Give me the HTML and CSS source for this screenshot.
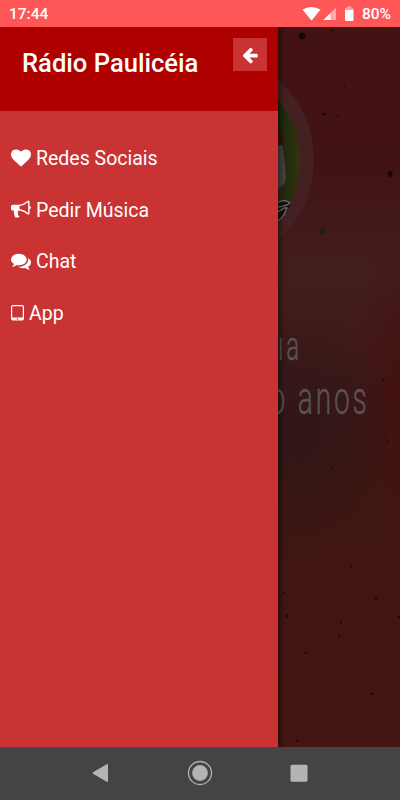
FILE: index.html
```
<!DOCTYPE html>
<html lang="pt-BR">

<head>
    <meta charset="utf-8">
    <meta name="viewport" content="width=device-width, initial-scale=1">
    <title>Rádio Paulicéia</title>
    <link rel="stylesheet" href="styles.css">
</head>

<body>
    <div class="phone">
        <!-- Status bar -->
        <div class="statusbar">
            <span class="clock">17:44</span>
            <svg class="status-icons" width="54" height="16" viewBox="0 0 54 16">
                <path fill="#fff" d="M0.500 3.600Q9.500-1.800 18.500 3.600L10.200 13.800Q9.500 14.600 8.800 13.800Z" />
                <path fill="#ffa9a9" d="M34 1.500V14H21.500Z" />
                <path fill="#fff" d="M28.500 7V14H21.500Z" />
                <path fill="#ff9d9d" d="M45 0.500h4.500v1.500h2v3h-8.500v-3h2Z" />
                <path fill="#fff" d="M43 4h8.500v10q0 1-1 1h-6.500q-1 0-1-1Z" />
            </svg>
            <span class="battery">80%</span>
        </div>

        <div class="screen">
            <!-- Side menu -->
            <div class="drawer">
                <div class="drawer-header">
                    <h1>Rádio Paulicéia</h1>
                    <button class="close-btn" aria-label="Fechar">
                        <svg width="18" height="18" viewBox="0 0 1792 1792">
                            <path fill="#fff" d="M1664 896v128q0 53-32.500 90.500t-84.500 37.500h-704l293 294q38 36 38 90t-38 90l-75 76q-37 37-90 37-52 0-91-37l-651-652q-37-37-37-90 0-52 37-91l651-650q38-38 91-38 52 0 90 38l75 74q38 38 38 91t-38 91l-293 293h704q52 0 84.500 37.500t32.500 90.500z" />
                        </svg>
                    </button>
                </div>
                <ul class="menu">
                    <li>
                        <svg width="20" height="20" viewBox="0 0 1792 1792">
                            <path d="M896 1664q-26 0-44-18l-624-602q-10-8-27.500-26t-55.500-65.500-68-97.500-53.500-121-23.500-138q0-220 127-344t351-124q62 0 126.500 21.500t120 58 95.500 68.500 76 68q36-36 76-68t95.500-68.500 120-58 126.500-21.500q224 0 351 124t127 344q0 221-229 450l-623 600q-18 18-44 18z" />
                        </svg>
                        <span>Redes Sociais</span>
                    </li>
                    <li>
                        <svg width="20" height="20" viewBox="0 0 1792 1792">
                            <path d="M1664 640q53 0 90.500 37.500t37.500 90.500-37.500 90.500-90.500 37.500v384q0 52-38 90t-90 38q-417-347-812-380-58 19-91 66t-31 100.500 40 92.500q-20 33-23 65.500t6 58 33.500 55 48 50 61.500 50.500q-29 58-111.500 83t-168.500 11.500-132-55.500q-7-23-29.500-87.500t-32-94.500-23-89-15-101 3.500-98.500 22-110.500h-122q-66 0-113-47t-47-113v-192q0-66 47-113t113-47h480q435 0 896-384 52 0 90 38t38 90v384zm-128 604v-954q-394 302-768 343v270q377 42 768 341z" />
                        </svg>
                        <span>Pedir Música</span>
                    </li>
                    <li>
                        <svg width="20" height="20" viewBox="0 0 1792 1792">
                            <path d="M1408 768q0 139-94 257t-256.500 186.500-353.500 68.500q-86 0-176-16-124 88-278 128-36 9-86 16h-3q-11 0-20.500-8t-11.500-21q-1-3-1-6.500t.5-6.500 2-6l2.500-5 3.500-5.500 4-5 4.500-5 4-4.500q5-6 23-25t26-29.500 22.500-29 25-38.500 20.500-44q-124-72-195-177t-71-224q0-139 94-257t256.500-186.500 353.500-68.500 353.500 68.500 256.500 186.500 94 257zm384 256q0 120-71 224.500t-195 176.500q10 24 20.500 44t25 38.500 22.500 29 26 29.500 23 25q1 1 4 4.500t4.500 5 4 5 3.500 5.500l2.500 5 2 6 .5 6.500-1 6.500q-3 14-13 22t-22 7q-50-7-86-16-154-40-278-128-90 16-176 16-271 0-472-132 58 4 88 4 161 0 309-45t264-129q125-92 192-212t67-254q0-77-23-152 129 71 204 178t75 230z" />
                        </svg>
                        <span>Chat</span>
                    </li>
                    <li>
                        <svg width="13" height="20" viewBox="0 0 13 20">
                            <path fill-rule="evenodd" d="M1.800 2h9.400Q13 2 13 3.800v11.900q0 1.800-1.800 1.800H1.800Q0 17.500 0 15.700V3.800Q0 2 1.800 2zM1.200 3.700v10.700h10.600V3.700q0-.5-.5-.5H1.700q-.5 0-.5.500zM6.500 15.200a.75.75 0 1 0 .01 0z" />
                        </svg>
                        <span>App</span>
                    </li>
                </ul>
            </div>

            <!-- Dimmed player page behind the menu -->
            <svg class="player" width="122" height="720" viewBox="278 27 122 720">
                <defs>
                    <linearGradient id="base" x1="0" y1="0" x2="0" y2="1">
                        <stop offset="0" stop-color="#431214" />
                        <stop offset=".2" stop-color="#421314" />
                        <stop offset=".34" stop-color="#431e1e" />
                        <stop offset=".5" stop-color="#3e1717" />
                        <stop offset=".65" stop-color="#3f1613" />
                        <stop offset="1" stop-color="#431510" />
                    </linearGradient>
                    <radialGradient id="side">
                        <stop offset="0" stop-color="#451010" stop-opacity=".8" />
                        <stop offset="1" stop-color="#451010" stop-opacity="0" />
                    </radialGradient>
                    <radialGradient id="glow">
                        <stop offset="0" stop-color="#2d1717" stop-opacity=".85" />
                        <stop offset="1" stop-color="#2d1717" stop-opacity="0" />
                    </radialGradient>
                    <linearGradient id="shade" x1="0" y1="0" x2="1" y2="0">
                        <stop offset="0" stop-color="#000" stop-opacity=".35" />
                        <stop offset="1" stop-color="#000" stop-opacity="0" />
                    </linearGradient>
                    <linearGradient id="green" gradientUnits="userSpaceOnUse" x1="278" y1="0" x2="301" y2="0">
                        <stop offset="0" stop-color="#1a230f" />
                        <stop offset=".6" stop-color="#29300f" />
                        <stop offset="1" stop-color="#363011" />
                    </linearGradient>
                </defs>
                <rect x="278" y="27" width="122" height="720" fill="url(#base)" />
                <ellipse cx="405" cy="385" rx="55" ry="170" fill="url(#side)" />
                <ellipse cx="300" cy="430" rx="90" ry="125" fill="url(#glow)" />

                <!-- station logo -->
                <ellipse cx="228" cy="160" rx="86" ry="98" fill="#452022" />
                <ellipse cx="228" cy="160" rx="72.500" ry="82" fill="url(#green)" />
                <path fill="#3a0f0f" d="M278 127Q283 134 284 143L278 147Z" />
                <path fill="#45423f" d="M278 146Q282 143 283 148L286 176Q285 186 280 190L278 192Z" />
                <path fill="#3d201c" d="M278 190L283 184L282 200H278Z" />
                <path fill="#14120c" d="M278 202Q289 199 291 204Q287 213 278 223Z" />
                <path fill="none" stroke="#666361" stroke-width="1.500" d="M278 202Q287 199 290 203Q287 206 278 207M278 212Q285 207 287 208Q284 217 278 221" />

                <!-- dust -->
                <g fill="#160809">
                    <ellipse cx="302" cy="36" rx="3.200" ry="3.600" />
                    <ellipse cx="390" cy="174" rx="2.500" ry="3" />
                    <ellipse cx="322.500" cy="231" rx="2.700" ry="3.200" fill="#29191a" />
                    <circle cx="324" cy="114" r="1.600" />
                    <circle cx="337.500" cy="115.500" r="1" />
                    <circle cx="362" cy="116" r=".8" />
                    <circle cx="332" cy="30.500" r="1" />
                    <circle cx="344.500" cy="85.500" r=".9" />
                    <circle cx="383" cy="379.500" r="1" />
                    <path d="M384.500 437.500L388.500 441.500L387.500 443Z" />
                    <circle cx="332" cy="468" r=".8" />
                    <circle cx="351" cy="566.500" r="1.100" />
                    <circle cx="376" cy="598" r="1.500" />
                    <circle cx="284" cy="593" r="1" />
                    <circle cx="287" cy="616" r="1.300" />
                    <circle cx="341" cy="622.500" r="1" />
                    <circle cx="339" cy="635.500" r=".9" />
                    <circle cx="305.500" cy="653" r="1.100" />
                    <circle cx="372" cy="694" r="1.400" />
                    <circle cx="399" cy="617" r="1.200" />
                    <circle cx="297" cy="741" r="1" />
                </g>

                <g class="player-text">
                    <text transform="translate(278 360) scale(.6 1)" font-size="40" letter-spacing="5">ıa</text>
                    <text transform="translate(269.500 413.500) scale(.61 1)" font-size="46" letter-spacing="4.700">o anos</text>
                </g>
                <rect x="278" y="27" width="7" height="720" fill="url(#shade)" />
            </svg>
        </div>

        <!-- Android buttons -->
        <div class="navbar">
            <svg width="26" height="26" viewBox="0 0 26 26">
                <path fill="#b4b4b5" d="M5 12.200L18.800 4.200Q20 3.700 20 5V21Q20 22.300 18.800 21.800L5 13.800Q4 13 5 12.200Z" />
            </svg>
            <svg width="26" height="26" viewBox="0 0 26 26">
                <circle cx="13" cy="13" r="11.500" fill="none" stroke="#b4b4b5" stroke-width="1.300" />
                <circle cx="13" cy="13" r="7.900" fill="#b4b4b5" />
            </svg>
            <svg width="26" height="26" viewBox="0 0 26 26">
                <rect x="4.500" y="4.700" width="17" height="17" rx="1.500" fill="#b4b4b5" />
            </svg>
        </div>
    </div>
</body>

</html>
```
FILE: styles.css
```
body {
    font-family: Roboto, Arial, sans-serif;
    margin: 0;
}

.phone {
    display: flex;
    flex-direction: column;
    width: 400px;
    height: 800px;
    overflow: hidden;
    color: white;
}

.statusbar {
    display: flex;
    align-items: center;
    height: 27px;
    padding: 1px 9px 0 9px;
    box-sizing: border-box;
    background-color: #ff5757;
    font-size: 15.5px;
    font-weight: 500;
}

.status-icons {
    margin-left: auto;
    margin-right: 6px;
}

.screen {
    display: flex;
    flex: 1;
    min-height: 0;
}

.drawer {
    width: 278px;
    background-color: #c93334;
}

.drawer-header {
    display: flex;
    justify-content: space-between;
    align-items: flex-start;
    height: 84px;
    padding: 11px 11px 0 22px;
    box-sizing: border-box;
    background-color: #af0000;
}

.drawer-header h1 {
    margin: 10px 0 0;
    font-size: 25.6px;
    line-height: 30px;
    font-weight: 500;
}

.close-btn {
    display: flex;
    align-items: center;
    justify-content: center;
    width: 34px;
    height: 33px;
    padding: 0;
    border: none;
    background-color: #c93334;
    cursor: pointer;
}

.menu {
    list-style: none;
    margin: 0;
    padding: 21px 11px;
}

.menu li {
    display: flex;
    align-items: center;
    gap: 5px;
    height: 51.6px;
    font-size: 19.5px;
}

.menu span {
    padding-top: 2px;
}

.menu svg {
    fill: white;
}

.player {
    display: block;
}

.player-text {
    font-family: Roboto, Arial, sans-serif;
    font-weight: 300;
    fill: #5a5351;
    stroke: #5a5351;
    stroke-width: .5px;
}

.navbar {
    display: flex;
    align-items: center;
    justify-content: center;
    gap: 73px;
    height: 53px;
    padding-bottom: 1px;
    box-sizing: border-box;
    background-color: #444446;
}
```
